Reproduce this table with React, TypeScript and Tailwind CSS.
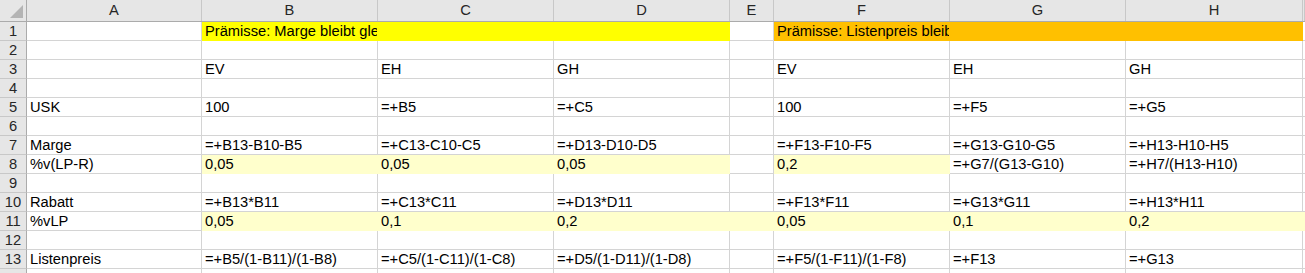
import React from "react"

const font = { fontFamily: '"Liberation Sans", Arial, sans-serif' }

// column letter + width in px (I is what's left of the window)
const columns: [string, string][] = [
    ["A", "w-[175px]"],
    ["B", "w-[176px]"],
    ["C", "w-[176px]"],
    ["D", "w-[176px]"],
    ["E", "w-[44px]"],
    ["F", "w-[176px]"],
    ["G", "w-[176px]"],
    ["H", "w-[177px]"],
    ["I", "flex-1"],
]

const values: Record<number, Record<string, string>> = {
    1: { B: "Prämisse: Marge bleibt gleich", F: "Prämisse: Listenpreis bleibt gleich" },
    3: { B: "EV", C: "EH", D: "GH", F: "EV", G: "EH", H: "GH" },
    5: { A: "USK", B: "100", C: "=+B5", D: "=+C5", F: "100", G: "=+F5", H: "=+G5" },
    7: {
        A: "Marge",
        B: "=+B13-B10-B5",
        C: "=+C13-C10-C5",
        D: "=+D13-D10-D5",
        F: "=+F13-F10-F5",
        G: "=+G13-G10-G5",
        H: "=+H13-H10-H5",
    },
    8: {
        A: "%v(LP-R)",
        B: "0,05",
        C: "0,05",
        D: "0,05",
        F: "0,2",
        G: "=+G7/(G13-G10)",
        H: "=+H7/(H13-H10)",
    },
    10: {
        A: "Rabatt",
        B: "=+B13*B11",
        C: "=+C13*C11",
        D: "=+D13*D11",
        F: "=+F13*F11",
        G: "=+G13*G11",
        H: "=+H13*H11",
    },
    11: { A: "%vLP", B: "0,05", C: "0,1", D: "0,2", F: "0,05", G: "0,1", H: "0,2" },
    13: {
        A: "Listenpreis",
        B: "=+B5/(1-B11)/(1-B8)",
        C: "=+C5/(1-C11)/(1-C8)",
        D: "=+D5/(1-D11)/(1-D8)",
        F: "=+F5/(1-F11)/(1-F8)",
        G: "=+F13",
        H: "=+G13",
    },
}

const yellow = "bg-[#ffff00] border-[#ffff00]"
const orange = "bg-[#ffc000] border-[#ffc000]"
const pale = "bg-[#ffffcc] border-[#ffffcc]"

const fills: Record<number, Record<string, string>> = {
    1: { B: yellow, C: yellow, D: yellow, F: orange, G: orange, H: orange },
    8: { B: pale, C: pale, D: pale, F: pale },
    11: { B: pale, C: pale, D: pale, E: pale, F: pale, G: pale, H: pale, I: pale },
}

const rows = Array.from({ length: 14 }, (_, i) => i + 1)

export default function App() {
    return (
        <div className="w-[1305px] h-[273px] overflow-hidden bg-white text-[14.7px] text-black" style={font}>
            {/* column headers */}
            <div className="flex h-[22px] bg-[#e6e6e6] border-b border-[#ababab]">
                <div className="relative w-[27px] shrink-0 border-r border-[#ababab]">
                    <div className="absolute right-[3px] bottom-[3px] w-0 h-0 border-l-[13px] border-l-transparent border-b-[13px] border-b-[#b4b4b4]" />
                </div>
                {columns.map(([col, w]) => (
                    <div key={col} className={`${w} shrink-0 flex items-center justify-center overflow-hidden border-r border-[#c8c8c8] text-[#262626]`}>
                        {col !== "I" && col}
                    </div>
                ))}
            </div>

            {rows.map(r => (
                <div key={r} className="flex h-[19px]">
                    <div className="w-[27px] shrink-0 flex items-center justify-center bg-[#e6e6e6] border-r border-b border-[#ababab] border-b-[#c8c8c8] text-[#262626]">
                        {r}
                    </div>
                    {columns.map(([col, w]) => {
                        const fill = fills[r]?.[col] ?? "bg-white border-[#d4d4d4]"
                        return (
                            <div key={col} className={`${w} shrink-0 flex items-end overflow-hidden whitespace-nowrap border-r border-b pl-[3px] leading-[17px] ${fill}`}>
                                {values[r]?.[col] ?? ""}
                            </div>
                        )
                    })}
                </div>
            ))}
        </div>
    )
}
